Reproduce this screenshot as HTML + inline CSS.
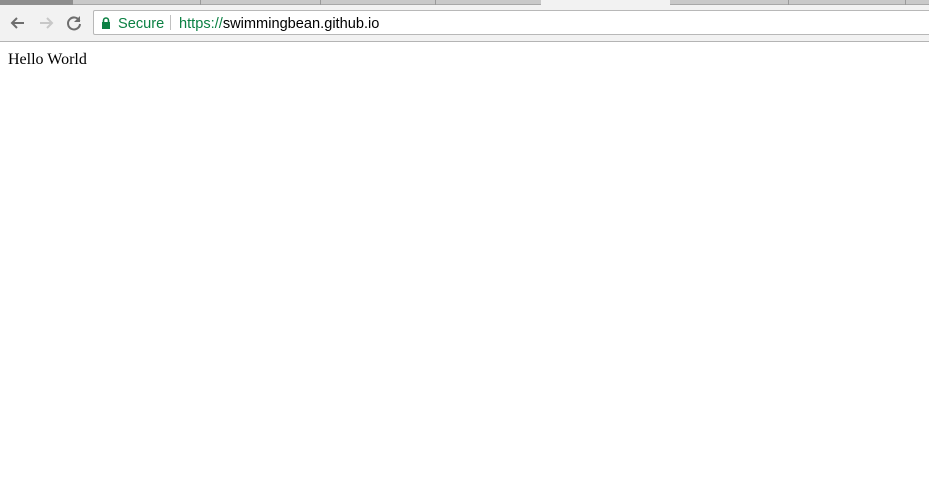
<!DOCTYPE html>
<html><head><style>
*{margin:0;padding:0;box-sizing:border-box}
body{width:929px;height:482px;background:#fff;position:relative;overflow:hidden}
.tabs{position:absolute;left:0;top:0;width:929px;height:5px;background:#c9c9c9;border-bottom:1px solid #a8a8a8}
.t{position:absolute;top:0;height:5px;border-left:1px solid #9a9a9a}
.tool{position:absolute;left:0;top:5px;width:929px;height:37px;background:#f2f2f2;border-bottom:1px solid #b4b4b4}
.omni{position:absolute;left:93px;top:5px;width:840px;height:25px;background:#fff;border:1px solid #b8b8b8;border-radius:2px;font:14.6px "Liberation Sans",sans-serif;line-height:26px}
.hello{position:absolute;left:8px;top:51px;font:16px "Liberation Serif",serif;color:#000}
</style></head><body>
<div class="tabs">
<div style="position:absolute;left:0;top:0;width:73px;height:5px;background:#8e8e8e"></div>
<div class="t" style="left:200px"></div><div class="t" style="left:320px"></div><div class="t" style="left:435px"></div>
<div style="position:absolute;left:541px;top:0;width:129px;height:6px;background:#f2f2f2"></div>
<div class="t" style="left:788px"></div><div class="t" style="left:905px"></div>
</div>
<div class="tool">
<svg style="position:absolute;left:8px;top:8px" width="20" height="20" viewBox="0 0 20 20"><path d="M16 10H4M9 5L4 10L9 15" stroke="#6e6e6e" stroke-width="2" fill="none"/></svg>
<svg style="position:absolute;left:36px;top:8px" width="20" height="20" viewBox="0 0 20 20"><path d="M4 10H16M11 5L16 10L11 15" stroke="#c8c8c8" stroke-width="2" fill="none"/></svg>
<svg style="position:absolute;left:64px;top:8px" width="20" height="20" viewBox="0 0 20 20"><path d="M15.5 8A6 6 0 1 0 16 11" stroke="#6e6e6e" stroke-width="2" fill="none"/><path d="M16 3V9H10Z" fill="#6e6e6e"/></svg>
<div class="omni">
<svg style="position:absolute;left:7px;top:6px" width="10" height="12" viewBox="0 0 10 12"><path d="M2.5 5V3.5A2.5 2.5 0 0 1 7.5 3.5V5" stroke="#0b8043" stroke-width="1.6" fill="none"/><rect x="1" y="5" width="8" height="7" fill="#0b8043"/></svg>
<span style="position:absolute;left:24px;color:#0b8043">Secure</span>
<span style="position:absolute;left:76px;top:4px;width:1px;height:15px;background:#c0c0c0"></span>
<span style="position:absolute;left:85px"><span style="color:#0b8043">https://</span><span style="color:#000">swimmingbean.github.io</span></span>
</div>
</div>
<div class="hello">Hello World</div>
</body></html>
